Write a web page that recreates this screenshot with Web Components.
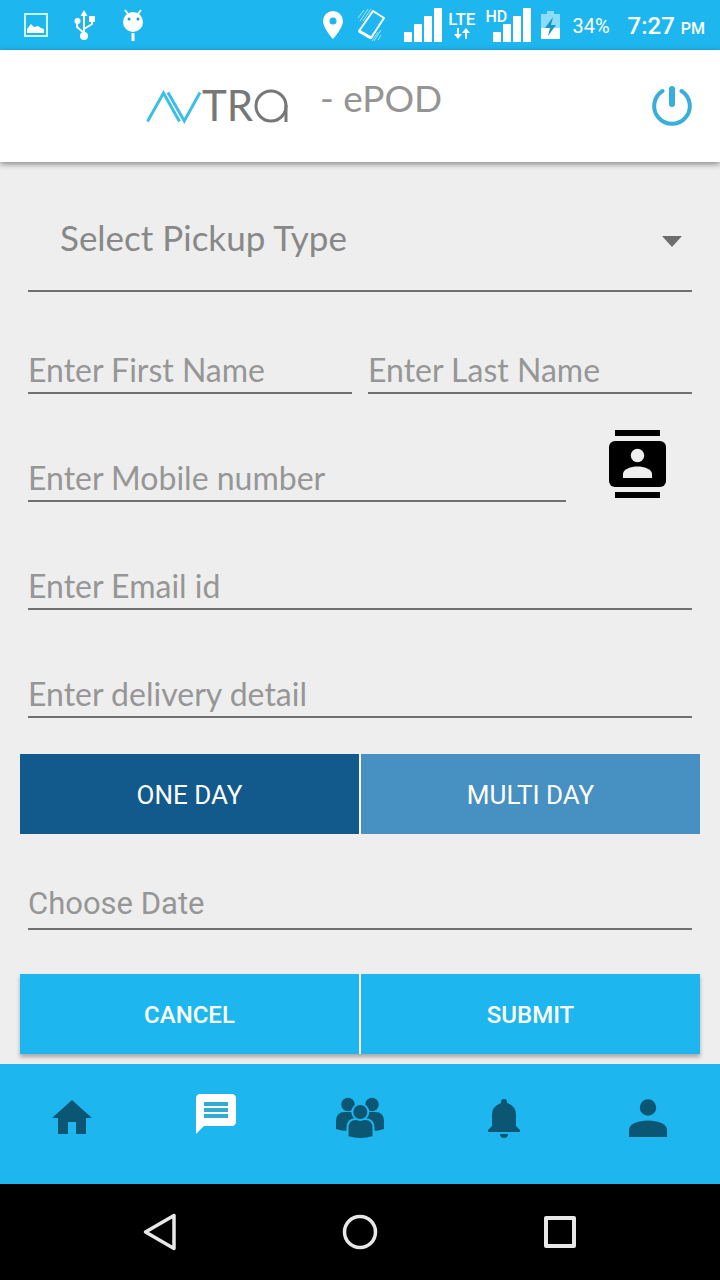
<!DOCTYPE html>
<html lang="en">
<head>
<meta charset="utf-8">
<meta name="viewport" content="width=device-width, initial-scale=1">
<title>AVTRA - ePOD</title>
<style>
  html, body { margin: 0; background: #eee; }
  body { font-family: Lato, "Open Sans", sans-serif; }
</style>
</head>
<body>
<epod-app></epod-app>

<script>
const define = (name, html, setup) => {
  const template = document.createElement('template');
  template.innerHTML = html;
  customElements.define(name, class extends HTMLElement {
    constructor() {
      super();
      this.attachShadow({ mode: 'open' }).append(template.content.cloneNode(true));
    }
    connectedCallback() { if (setup) setup(this, this.shadowRoot); }
  });
};

/* Android status bar */
define('status-bar', `
  <style>
    :host { display: flex; align-items: center; justify-content: space-between; height: 50px;
      padding: 0 15px 0 24px; background: #1eb6ee; color: #fff; font-family: Roboto, sans-serif; }
    svg { display: block; flex: none; }
    .left { display: flex; align-items: center; gap: 26px; }
    .right { display: flex; align-items: center; gap: 10px; }
    .net { display: flex; align-items: center; gap: 6px; }
    .lte { display: grid; justify-items: center; font-size: 17px; line-height: 16px; font-weight: 500; }
    .hd { position: relative; }
    .hd span { position: absolute; left: 0; top: 1px; font-size: 16px; line-height: 16px; font-weight: 500; }
    .pct { font-size: 20px; padding: 2px 8px 0 2px; }
    time { font-size: 24px; font-weight: 500; white-space: nowrap; padding-top: 2px; }
    small { font-size: 16px; }
  </style>
  <div class="left">
    <svg width="24" height="24" viewBox="0 0 24 24"><path d="M1 1H23V23H1Z" fill="none" stroke="#c9fbff" stroke-width="2"/><path d="M3 20V16L7 11L10 14L14 13L17 15L20 16V20Z" fill="#fff"/></svg>
    <svg width="22" height="32" viewBox="0 0 22 32" fill="#fff"><path d="M10 27V6M10 24L3 18V13M10 20L18 15V10" fill="none" stroke="#fff" stroke-width="2"/><path d="M6.500 7L10 1L13.500 7Z"/><circle cx="10" cy="27" r="4"/><circle cx="3.500" cy="12" r="3"/><path d="M15 7h6v6h-6z"/></svg>
    <svg width="22" height="32" viewBox="0 0 22 32"><path d="M3 1L6 5M19 1L16 5" stroke="#fff" stroke-width="2"/><circle cx="11" cy="13" r="10" fill="#fff"/><circle cx="7" cy="10" r="1.500" fill="#1e9bb8"/><circle cx="16" cy="10" r="1.500" fill="#1e9bb8"/><path d="M9.500 24h3v8h-3z" fill="#fff"/></svg>
  </div>
  <div class="right">
    <svg width="20" height="28" viewBox="0 0 20 28"><path fill="#fff" fill-rule="evenodd" d="M10 0A10 10 0 0 0 0 10C0 17 10 28 10 28S20 17 20 10A10 10 0 0 0 10 0ZM10 6.500A3.500 3.500 0 1 1 10 13.500A3.500 3.500 0 0 1 10 6.500Z"/></svg>
    <svg width="41" height="34" viewBox="0 0 41 34" fill="none" stroke="#fff"><path d="M20 3L31 10L18 30L6 23Z" stroke-width="2" stroke-linejoin="round"/><path d="M6 23L18 30" stroke-width="3"/><path d="M7 13L15 1M10 13L18 1M5 10L11 2M21 33L28 22M19 33L25 24M25 32L28 27" stroke="#a9e4fa"/></svg>
    <div class="net">
      <svg width="38" height="34" viewBox="0 0 38 34" fill="#fff"><path d="M0 24h8v10H0zM10 16h8v18h-8zM20 8h8v26h-8zM30 0h8v34h-8z"/></svg>
      <div class="lte"><span>LTE</span><svg width="18" height="13" viewBox="0 0 18 13" fill="#fff"><path d="M4 1H6V7H9L5 12L1 7H4ZM12 12H14V6H17L13 1L9 6H12Z"/></svg></div>
    </div>
    <div class="hd"><svg width="46" height="34" viewBox="0 0 46 34" fill="#fff"><path d="M8 24h8v10H8zM18 16h8v18h-8zM28 8h8v26h-8zM38 0h8v34h-8z"/></svg><span>HD</span></div>
    <svg width="19" height="28" viewBox="0 0 19 28"><path fill="#8bdcf7" d="M0 3H6V0H13V3H19V18H0Z"/><path fill="#fff" d="M0 17H19V28H0Z"/><path fill="#1598c5" d="M12 6L4 17H9L7 25L15 14H10Z"/></svg>
    <span class="pct">34%</span>
    <time>7:27 <small>PM</small></time>
  </div>`);

/* Brand header */
define('app-header', `
  <style>
    :host { display: flex; align-items: center; height: 112px; padding: 0 28px 0 146px; box-sizing: border-box;
      background: #fff; box-shadow: 0 2px 6px rgba(0,0,0,.45); position: relative; }
    .logo { display: block; flex: none; }
    h1 { flex: 1; margin: 0 0 16px 30px; font-size: 37px; line-height: 44px; font-weight: 400; color: #949494; }
    button { border: 0; padding: 0; background: none; }
    button svg { display: block; }
  </style>
  <svg class="logo" width="144" height="64" viewBox="0 -14 144 64" fill="none" role="img" aria-label="AVTRA">
    <path d="M1.500 33.500L17.500 5L33.500 33.500M22 4.500L38.300 33L54 4.500" stroke="#3bbfe6" stroke-width="3"/>
    <text x="56" y="33" font-family="Lato, sans-serif" font-size="42" font-weight="400" fill="#777">TR</text>
    <circle cx="125" cy="18" r="15" stroke="#777" stroke-width="3"/><path d="M140 17V34" stroke="#777" stroke-width="3"/>
  </svg>
  <h1>- ePOD</h1>
  <button aria-label="Log out"><svg width="40" height="40" viewBox="0 0 40 40" fill="none" stroke="#37afd8" stroke-linecap="round"><path d="M10.500 5A17.800 17.800 0 1 0 29.500 5" stroke-width="4"/><path d="M20 3V18" stroke-width="6"/></svg></button>`);

/* Underlined drop-down */
define('pickup-select', `
  <style>
    :host { display: block; position: relative; }
    select { appearance: none; display: block; width: 100%; height: 104px; margin: 0; padding: 0 60px 4px 32px;
      border: 0; border-bottom: 2px solid #707070; border-radius: 0; background: none; color: #888;
      font: 400 35px Lato, sans-serif; outline: 0; }
    svg { position: absolute; right: 10px; top: 48px; pointer-events: none; }
  </style>
  <select aria-label="Pickup type"><option>Select Pickup Type</option></select>
  <svg width="20" height="11" viewBox="0 0 20 11"><path d="M0 0H20L10 11Z" fill="#6d6d6d"/></svg>`);

/* Underlined text box */
define('line-field', `
  <style>
    :host { display: block; min-width: 0; font-family: Lato, sans-serif; }
    input { display: block; box-sizing: border-box; width: 100%; height: 48px; margin: 0; border: 0;
      padding: 0 0 var(--field-lift, 0); border-bottom: 2px solid #707070; border-radius: 0; background: none;
      color: #444; font-family: inherit; font-size: var(--field-size, 32px); font-weight: 400; outline: 0; }
    input::placeholder { color: #969696; opacity: 1; }
  </style>
  <input>`, (host, root) => {
    const input = root.querySelector('input');
    input.type = host.getAttribute('type') || 'text';
    input.placeholder = host.getAttribute('hint');
    input.setAttribute('aria-label', host.getAttribute('hint'));
  });

/* Two buttons that share a bar */
define('button-pair', `
  <style>
    :host { display: grid; grid-template-columns: 1fr 1fr; gap: 2px; background: #fff; }
  </style>
  <slot></slot>`);

define('bar-button', `
  <style>
    :host { display: block; }
    button { display: block; width: 100%; height: 80px; border: 0; padding: 2px 0 0; color: #fff;
      background: var(--bar, #1eb6ee); font: var(--bar-weight, 400) var(--bar-size, 26px) Roboto, sans-serif; }
  </style>
  <button><slot></slot></button>`);

define('pickup-form', `
  <style>
    :host { display: block; padding: 26px 20px 10px; }
    .fields { display: grid; gap: 60px; margin: 54px 8px 36px; }
    .names { display: grid; grid-template-columns: 1fr 1fr; gap: 16px; }
    .mobile { display: grid; grid-template-columns: 1fr 110px; gap: 16px; align-items: end; }
    .contacts { justify-self: center; margin: -24px 0 4px; border: 0; padding: 0; background: none; }
    .contacts svg { display: block; }
    pickup-select { margin: 0 8px; }
    .date { margin: 48px 8px 44px; font-family: Roboto, sans-serif; --field-size: 31px; --field-lift: 4px; }
    .one { --bar: #135a8c; }
    .multi { --bar: #4790c2; }
    .actions { --bar-size: 24px; --bar-weight: 500; box-shadow: 0 3px 4px rgba(0,0,0,.3); }
  </style>
  <pickup-select></pickup-select>
  <div class="fields">
    <div class="names"><line-field hint="Enter First Name"></line-field><line-field hint="Enter Last Name"></line-field></div>
    <div class="mobile">
      <line-field type="tel" hint="Enter Mobile number"></line-field>
      <button class="contacts" aria-label="Pick from contacts"><svg width="57" height="68" viewBox="0 0 57 68"><path d="M6 0H51V6H6ZM6 62H51V68H6Z"/><rect y="11" width="57" height="46" rx="6"/><g fill="#eee"><circle cx="28.500" cy="25.500" r="6.700"/><path d="M14 48V44C14 39 22 36.500 28.500 36.500S43 39 43 44V48Z"/></g></svg></button>
    </div>
    <line-field type="email" hint="Enter Email id"></line-field>
    <line-field hint="Enter delivery detail"></line-field>
  </div>
  <button-pair><bar-button class="one">ONE DAY</bar-button><bar-button class="multi">MULTI DAY</bar-button></button-pair>
  <line-field class="date" hint="Choose Date"></line-field>
  <button-pair class="actions"><bar-button>CANCEL</bar-button><bar-button>SUBMIT</bar-button></button-pair>`);

/* In-app tabs */
define('tab-bar', `
  <style>
    :host { display: block; position: relative; background: #1eb6ee; }
    nav { display: grid; grid-template-columns: repeat(5, 1fr); height: 120px; }
    a { display: block; padding-top: 30px; color: #0b5673; }
    svg { display: block; margin: 0 auto; fill: currentColor; }
    .active { color: #fff; }
  </style>
  <nav>
    <a href="#home" aria-label="Home"><svg width="48" height="48" viewBox="0 0 24 24"><path d="M10 20v-6h4v6h5v-8h3L12 3 2 12h3v8z"/></svg></a>
    <a href="#messages" aria-label="Messages" class="active"><svg width="48" height="48" viewBox="0 2 24 24"><path d="M20 2H4c-1.100 0-2 .9-2 2v18l4-4h14c1.100 0 2-.9 2-2V4c0-1.100-.9-2-2-2z"/><path fill="#2fabd6" d="M6 6h12v2H6zM6 9h12v2H6zM6 12h12v2H6z"/></svg></a>
    <a href="#team" aria-label="Team"><svg width="48" height="48" viewBox="0 0 48 48"><circle cx="12" cy="10.500" r="6.800"/><circle cx="36" cy="10.500" r="6.800"/><path d="M0 35V27Q0 18 9 18H15Q20 18 22 22V37H12Q5 37 0 35ZM48 35V27Q48 18 39 18H33Q28 18 26 22V37H36Q43 37 48 35Z"/><g stroke="#1eb6ee" stroke-width="2"><path d="M11.500 43V34Q11.500 25 20 25H29Q37.500 25 37.500 34V43Q31 45 24.500 45T11.500 43Z"/><circle cx="24.300" cy="18" r="8"/></g></svg></a>
    <a href="#alerts" aria-label="Alerts"><svg width="48" height="48" viewBox="0 0 48 48"><path d="M21 8Q21 5 24 5T27 8V9Q36 12 36 21V32L40 36V38H8V36L12 32V21Q12 12 21 9ZM20 40H28Q28 44 24 44T20 40Z"/></svg></a>
    <a href="#profile" aria-label="Profile"><svg width="48" height="48" viewBox="0 0 48 48"><circle cx="24" cy="13.500" r="8.200"/><path d="M5 43V36C5 30 14 26.500 24 26.500S43 30 43 36V43Z"/></svg></a>
  </nav>`);

/* Android navigation keys */
define('system-keys', `
  <style>
    :host { display: grid; grid-template-columns: repeat(3, 200px); justify-content: center; align-items: center; height: 96px; background: #000; }
    button { border: 0; padding: 0; background: none; justify-self: center; }
    svg { display: block; fill: none; stroke: #e8e8e8; stroke-width: 4; stroke-linejoin: round; }
  </style>
  <button aria-label="Back"><svg width="40" height="40" viewBox="0 0 40 40"><path d="M5.500 20L34 3.500V36.500Z" stroke-width="3.500"/></svg></button>
  <button aria-label="Home"><svg width="40" height="40" viewBox="0 0 40 40"><circle cx="20" cy="20" r="15.500" stroke-width="3.500"/></svg></button>
  <button aria-label="Recent apps"><svg width="40" height="40" viewBox="0 0 40 40"><path d="M6 6H34V34H6Z"/></svg></button>`);

define('epod-app', `
  <style>
    :host { display: flex; flex-direction: column; min-height: 100vh; background: #eee; }
    main { flex: 1; }
  </style>
  <status-bar></status-bar>
  <app-header></app-header>
  <main><pickup-form></pickup-form></main>
  <tab-bar></tab-bar>
  <system-keys></system-keys>`);
</script>
</body>
</html>
